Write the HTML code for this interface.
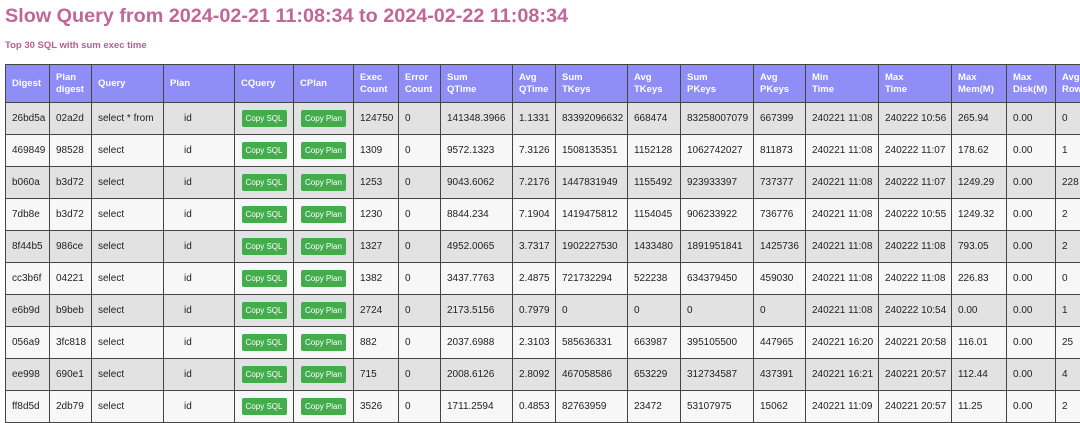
<!DOCTYPE html>
<html><head><meta charset="utf-8"><style>
body{margin:0;width:1080px;height:420px;overflow:hidden;background:#fff;font-family:"Liberation Sans",sans-serif;position:relative}
h1{position:absolute;left:5px;top:5px;margin:0;font-size:19.8px;font-weight:bold;color:#c0679a;white-space:nowrap}
h2{position:absolute;left:5px;top:40px;margin:0;font-size:9.5px;font-weight:bold;color:#b65f92;}
table{position:absolute;left:5px;top:64px;width:1110px;border-collapse:collapse;table-layout:fixed;font-size:10px;color:#222}
td,th{border:1px solid #444;padding:0 0 0 6px;overflow:hidden;white-space:nowrap;text-align:left}
th{background:#8e8ef6;color:#fff;font-weight:bold;height:37px;line-height:12px;font-size:9.5px}
td{height:31px}
tr:nth-child(even) td{background:#e2e2e2}
tr:nth-child(odd) td{background:#f7f7f7}
.b{display:inline-block;background:#43ad4c;color:#fff;font-size:8px;width:45px;height:17px;line-height:17px;text-align:center;border-radius:2px;vertical-align:middle}
td.c{padding:0;text-align:center}
td.p{padding-left:20px}
</style></head><body>
<h1>Slow Query from 2024-02-21 11:08:34 to 2024-02-22 11:08:34</h1>
<h2>Top 30 SQL with sum exec time</h2>
<table>
<colgroup><col style="width:44px"><col style="width:42px"><col style="width:72px"><col style="width:71px"><col style="width:59px"><col style="width:60px"><col style="width:45px"><col style="width:42px"><col style="width:72px"><col style="width:43px"><col style="width:72px"><col style="width:53px"><col style="width:73px"><col style="width:52px"><col style="width:73px"><col style="width:73px"><col style="width:55px"><col style="width:49px"><col style="width:60px"></colgroup>
<tr><th>Digest</th><th>Plan<br>digest</th><th>Query</th><th>Plan</th><th>CQuery</th><th>CPlan</th><th>Exec<br>Count</th><th>Error<br>Count</th><th>Sum<br>QTime</th><th>Avg<br>QTime</th><th>Sum<br>TKeys</th><th>Avg<br>TKeys</th><th>Sum<br>PKeys</th><th>Avg<br>PKeys</th><th>Min<br>Time</th><th>Max<br>Time</th><th>Max<br>Mem(M)</th><th>Max<br>Disk(M)</th><th>Avg<br>Rows</th></tr>
<tr><td>26bd5a</td><td>02a2d</td><td>select * from</td><td class="p">id</td><td class="c"><span class="b">Copy SQL</span></td><td class="c"><span class="b">Copy Plan</span></td><td>124750</td><td>0</td><td>141348.3966</td><td>1.1331</td><td>83392096632</td><td>668474</td><td>83258007079</td><td>667399</td><td>240221 11:08</td><td>240222 10:56</td><td>265.94</td><td>0.00</td><td>0</td></tr>
<tr><td>469849</td><td>98528</td><td>select</td><td class="p">id</td><td class="c"><span class="b">Copy SQL</span></td><td class="c"><span class="b">Copy Plan</span></td><td>1309</td><td>0</td><td>9572.1323</td><td>7.3126</td><td>1508135351</td><td>1152128</td><td>1062742027</td><td>811873</td><td>240221 11:08</td><td>240222 11:07</td><td>178.62</td><td>0.00</td><td>1</td></tr>
<tr><td>b060a</td><td>b3d72</td><td>select</td><td class="p">id</td><td class="c"><span class="b">Copy SQL</span></td><td class="c"><span class="b">Copy Plan</span></td><td>1253</td><td>0</td><td>9043.6062</td><td>7.2176</td><td>1447831949</td><td>1155492</td><td>923933397</td><td>737377</td><td>240221 11:08</td><td>240222 11:07</td><td>1249.29</td><td>0.00</td><td>228</td></tr>
<tr><td>7db8e</td><td>b3d72</td><td>select</td><td class="p">id</td><td class="c"><span class="b">Copy SQL</span></td><td class="c"><span class="b">Copy Plan</span></td><td>1230</td><td>0</td><td>8844.234</td><td>7.1904</td><td>1419475812</td><td>1154045</td><td>906233922</td><td>736776</td><td>240221 11:08</td><td>240222 10:55</td><td>1249.32</td><td>0.00</td><td>2</td></tr>
<tr><td>8f44b5</td><td>986ce</td><td>select</td><td class="p">id</td><td class="c"><span class="b">Copy SQL</span></td><td class="c"><span class="b">Copy Plan</span></td><td>1327</td><td>0</td><td>4952.0065</td><td>3.7317</td><td>1902227530</td><td>1433480</td><td>1891951841</td><td>1425736</td><td>240221 11:08</td><td>240222 11:08</td><td>793.05</td><td>0.00</td><td>2</td></tr>
<tr><td>cc3b6f</td><td>04221</td><td>select</td><td class="p">id</td><td class="c"><span class="b">Copy SQL</span></td><td class="c"><span class="b">Copy Plan</span></td><td>1382</td><td>0</td><td>3437.7763</td><td>2.4875</td><td>721732294</td><td>522238</td><td>634379450</td><td>459030</td><td>240221 11:08</td><td>240222 11:08</td><td>226.83</td><td>0.00</td><td>0</td></tr>
<tr><td>e6b9d</td><td>b9beb</td><td>select</td><td class="p">id</td><td class="c"><span class="b">Copy SQL</span></td><td class="c"><span class="b">Copy Plan</span></td><td>2724</td><td>0</td><td>2173.5156</td><td>0.7979</td><td>0</td><td>0</td><td>0</td><td>0</td><td>240221 11:08</td><td>240222 10:54</td><td>0.00</td><td>0.00</td><td>1</td></tr>
<tr><td>056a9</td><td>3fc818</td><td>select</td><td class="p">id</td><td class="c"><span class="b">Copy SQL</span></td><td class="c"><span class="b">Copy Plan</span></td><td>882</td><td>0</td><td>2037.6988</td><td>2.3103</td><td>585636331</td><td>663987</td><td>395105500</td><td>447965</td><td>240221 16:20</td><td>240221 20:58</td><td>116.01</td><td>0.00</td><td>25</td></tr>
<tr><td>ee998</td><td>690e1</td><td>select</td><td class="p">id</td><td class="c"><span class="b">Copy SQL</span></td><td class="c"><span class="b">Copy Plan</span></td><td>715</td><td>0</td><td>2008.6126</td><td>2.8092</td><td>467058586</td><td>653229</td><td>312734587</td><td>437391</td><td>240221 16:21</td><td>240221 20:57</td><td>112.44</td><td>0.00</td><td>4</td></tr>
<tr><td>ff8d5d</td><td>2db79</td><td>select</td><td class="p">id</td><td class="c"><span class="b">Copy SQL</span></td><td class="c"><span class="b">Copy Plan</span></td><td>3526</td><td>0</td><td>1711.2594</td><td>0.4853</td><td>82763959</td><td>23472</td><td>53107975</td><td>15062</td><td>240221 11:09</td><td>240221 20:57</td><td>11.25</td><td>0.00</td><td>2</td></tr>
</table>
</body></html>
